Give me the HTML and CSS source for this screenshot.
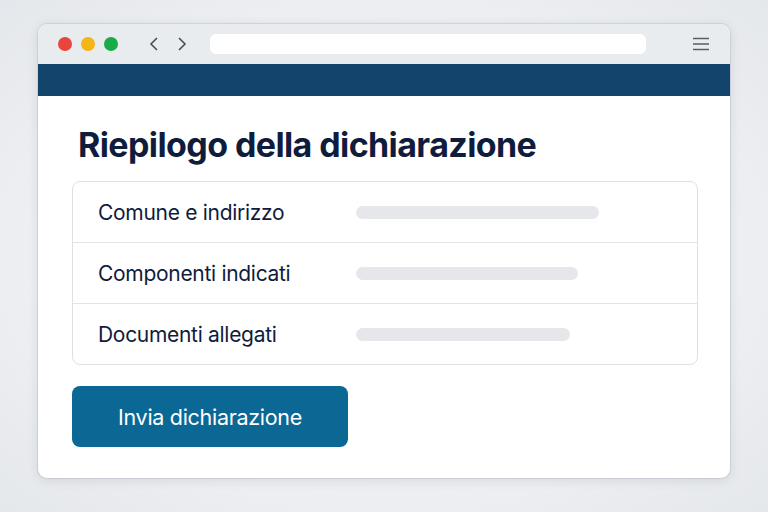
FILE: index.html
```html
<!DOCTYPE html>
<html lang="it">
<head>
  <meta charset="UTF-8" />
  <meta name="viewport" content="width=device-width, initial-scale=1.0" />
  <title>Riepilogo della dichiarazione</title>
  <link rel="stylesheet" href="styles.css">
</head>
<body>
  <div class="window">
    <div class="toolbar">
      <div class="dots">
        <span class="dot red"></span>
        <span class="dot yellow"></span>
        <span class="dot green"></span>
      </div>
      <div class="arrows">
        <svg width="12" height="16" viewBox="0 0 12 16"><path d="M9 2 L3 8 L9 14" fill="none" stroke="#4a4f57" stroke-width="1.6"/></svg>
        <svg width="12" height="16" viewBox="0 0 12 16"><path d="M3 2 L9 8 L3 14" fill="none" stroke="#4a4f57" stroke-width="1.6"/></svg>
      </div>
      <div class="address"></div>
      <svg class="menu" width="18" height="14" viewBox="0 0 18 14"><path d="M1 1.5 H17 M1 7 H17 M1 12.5 H17" stroke="#5a5f66" stroke-width="1.6"/></svg>
    </div>
    <div class="band"></div>
    <div class="content">
      <h1>Riepilogo della dichiarazione</h1>
      <div class="summary">
        <div class="row">
          <span class="label">Comune e indirizzo</span>
          <span class="bar" style="width: 243px;"></span>
        </div>
        <div class="row">
          <span class="label">Componenti indicati</span>
          <span class="bar" style="width: 222px;"></span>
        </div>
        <div class="row">
          <span class="label">Documenti allegati</span>
          <span class="bar" style="width: 214px;"></span>
        </div>
      </div>
      <button class="send">Invia dichiarazione</button>
    </div>
  </div>
</body>
</html>
```

FILE: styles.css
```css
html, body {
  height: 100%;
}
body {
  margin: 0;
  padding: 24px 38px 0 38px;
  box-sizing: border-box;
  font-family: "Inter", "Liberation Sans", sans-serif;
  background: radial-gradient(ellipse at center, #f7f8fa 0%, #eceef1 70%, #e4e7eb 100%);
}
.window {
  width: 692px;
  height: 454px;
  background: #ffffff;
  border-radius: 9px;
  overflow: hidden;
  box-shadow: 0 2px 12px rgba(40, 50, 70, 0.12), 0 0 0 1px rgba(200, 205, 212, 0.6);
  display: flex;
  flex-direction: column;
}
.toolbar {
  height: 40px;
  background: #e9ecef;
  display: flex;
  align-items: center;
  padding: 0 20px 0 20px;
}
.dots {
  display: flex;
  gap: 9px;
}
.dot {
  width: 14px;
  height: 14px;
  border-radius: 50%;
}
.red { background: #e8453c; }
.yellow { background: #f5b417; }
.green { background: #1aaa48; }
.arrows {
  display: flex;
  gap: 16px;
  margin-left: 30px;
}
.address {
  flex: 1;
  height: 20px;
  background: #ffffff;
  border-radius: 6px;
  margin: 0 46px 0 22px;
}
.menu {
  display: block;
}
.band {
  height: 32px;
  background: #13456c;
}
.content {
  flex: 1;
  padding: 29px 32px 0 34px;
}
h1 {
  margin: 0 0 16px 6px;
  font-size: 34px;
  font-weight: 700;
  color: #101c3c;
  letter-spacing: -0.6px;
  line-height: 40px;
}
.summary {
  border: 1px solid #dde1e6;
  border-radius: 8px;
}
.row {
  height: 60px;
  display: flex;
  align-items: center;
  padding-left: 25px;
  border-top: 1px solid #e1e4e8;
}
.row:first-child {
  border-top: none;
}
.label {
  width: 258px;
  font-size: 21px;
  color: #101c3c;
  letter-spacing: -0.3px;
}
.bar {
  height: 13px;
  border-radius: 7px;
  background: #e5e7ea;
}
.send {
  margin-top: 21px;
  width: 276px;
  height: 61px;
  border: none;
  border-radius: 8px;
  background: #0b6894;
  color: #ffffff;
  font-family: inherit;
  font-size: 21.5px;
  letter-spacing: -0.3px;
  cursor: pointer;
}
```
